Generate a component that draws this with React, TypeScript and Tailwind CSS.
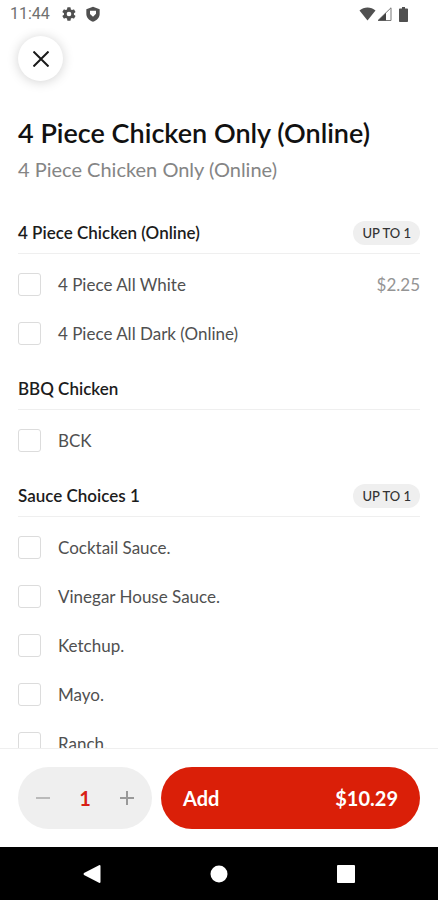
import { useState } from "react";

type Option = { name: string; price?: string };
type Group = { id: string; title: string; badge?: string; options: Option[] };

const groups: Group[] = [
  {
    id: "pieces",
    title: "4 Piece Chicken (Online)",
    badge: "UP TO 1",
    options: [
      { name: "4 Piece All White", price: "$2.25" },
      { name: "4 Piece All Dark (Online)" },
    ],
  },
  {
    id: "bbq",
    title: "BBQ Chicken",
    options: [{ name: "BCK" }],
  },
  {
    id: "sauces",
    title: "Sauce Choices 1",
    badge: "UP TO 1",
    options: [
      { name: "Cocktail Sauce." },
      { name: "Vinegar House Sauce." },
      { name: "Ketchup." },
      { name: "Mayo." },
      { name: "Ranch." },
    ],
  },
];

function StatusBar() {
  return (
    <div className="flex h-7 shrink-0 items-center pr-[30px] pl-[10px] font-[Roboto,sans-serif] text-[#505050]">
      <span className="text-base text-[#707070]">11:44</span>
      <svg viewBox="0 0 24 24" className="ml-[11px] size-4" fill="currentColor">
        <path
          fillRule="evenodd"
          d="M19.4 13a7.8 7.8 0 0 0 0-2l2.100-1.600a.5.5 0 0 0 .1-.7l-2-3.400a.5.5 0 0 0-.6-.2l-2.500 1a7.300 7.300 0 0 0-1.700-1l-.4-2.600a.5.5 0 0 0-.5-.5h-4a.5.5 0 0 0-.5.5L9 5.100a7.300 7.300 0 0 0-1.700 1l-2.500-1a.5.5 0 0 0-.6.2l-2 3.400a.5.5 0 0 0 .1.7L4.500 11a7.800 7.800 0 0 0 0 2l-2.200 1.600a.5.5 0 0 0-.1.700l2 3.400c.1.2.4.3.6.2l2.500-1a7.300 7.300 0 0 0 1.700 1l.4 2.600c0 .3.2.5.5.5h4c.3 0 .5-.2.5-.5l.4-2.600a7.300 7.300 0 0 0 1.700-1l2.500 1c.2.1.5 0 .6-.2l2-3.400a.5.500 0 0 0-.1-.7L19.400 13ZM12 15.500a3.500 3.500 0 1 1 0-7 3.500 3.500 0 0 1 0 7Z"
        />
      </svg>
      <svg viewBox="0 0 24 24" className="ml-2 size-4" fill="currentColor">
        <path
          fillRule="evenodd"
          d="M12 1 2 5v7c0 5.500 4.300 9.700 10 11.500 5.700-1.800 10-6 10-11.500V5L12 1ZM7.500 7h9v4.500L12 16 7.500 12Z"
        />
      </svg>
      <div className="ml-auto flex items-center">
        <svg viewBox="0 0 17 14" className="h-[14px] w-[17px]" fill="currentColor">
          <path d="M.5 3.500C5-.5 12-.5 16.500 3.500L8.500 13.500Z" />
        </svg>
        <svg viewBox="0 0 15 14" className="ml-[1px] h-[14px] w-[15px]">
          <path d="M1 13.500 14 .8v12.700Z" fill="#fff" stroke="#777" />
          <path d="M1 13.500 9 5.700v7.800Z" fill="#444" />
        </svg>
        <svg viewBox="0 0 9 15" className="ml-[7px] h-[15px] w-[9px]" fill="currentColor">
          <path d="M3 0h3v1.500h2.200c.5 0 .8.3.8.8v11.900c0 .5-.3.800-.8.800H.8c-.5 0-.8-.3-.8-.8V2.300c0-.5.3-.8.8-.8H3Z" />
        </svg>
      </div>
    </div>
  );
}

function OptionGroup({ group }: { group: Group }) {
  return (
    <section aria-labelledby={group.id} className="mb-[10px]">
      <div className="flex h-[42px] items-center justify-between border-b border-[#efefef]">
        <h2 id={group.id} className="text-[17px] leading-6 font-semibold text-[#1c1c1c]">
          {group.title}
        </h2>
        {group.badge && (
          <span className="rounded-full bg-[#efefef] px-[9px] text-[13px] leading-6 font-medium text-[#333]">
            {group.badge}
          </span>
        )}
      </div>
      <div className="pt-[6px]">
        {group.options.map((option) => (
          <label key={option.name} className="flex h-[49px] items-center">
            <input
              type="checkbox"
              className="size-[23px] shrink-0 appearance-none rounded-[3px] border border-[#dcdcdc] bg-white checked:border-[#da1f08] checked:bg-[#da1f08]"
            />
            <span className="ml-[17px] text-[17px] leading-6 text-[#505050]">
              {option.name}
            </span>
            {option.price && (
              <span className="ml-auto text-[17px] leading-6 text-[#949494]">
                {option.price}
              </span>
            )}
          </label>
        ))}
      </div>
    </section>
  );
}

export default function App() {
  const [count, setCount] = useState(1);

  return (
    <div className="flex h-screen flex-col overflow-hidden bg-white font-[Lato,sans-serif]">
      <StatusBar />

      <main className="min-h-0 flex-1 overflow-hidden px-[18px] pt-2">
        <button
          type="button"
          aria-label="Close"
          className="flex size-[45px] items-center justify-center rounded-full bg-white text-[#1a1a1a] shadow-[0_1px_12px_rgba(0,0,0,0.18)]"
        >
          <svg viewBox="0 0 16 16" className="size-4" stroke="currentColor" strokeWidth="2">
            <path d="M.5.5l15 15M15.500.5l-15 15" />
          </svg>
        </button>

        <h1 className="mt-[34px] text-[27px] leading-9 font-semibold text-[#111]">
          4 Piece Chicken Only (Online)
        </h1>
        <p className="mt-[6px] mb-[31px] text-xl leading-6 text-[#858585]">
          4 Piece Chicken Only (Online)
        </p>

        {groups.map((group) => (
          <OptionGroup key={group.id} group={group} />
        ))}
      </main>

      <footer className="flex shrink-0 gap-[9px] border-t border-[#efefef] px-[18px] py-[18px]">
        <div className="flex h-[62px] w-[134px] shrink-0 items-center justify-between rounded-full bg-[#efefef] px-[18px]">
          <button
            type="button"
            aria-label="Remove one"
            onClick={() => setCount(Math.max(1, count - 1))}
            className="text-[#bababa]"
          >
            <svg viewBox="0 0 14 14" className="size-[14px]" stroke="currentColor" strokeWidth="2">
              <path d="M0 7h14" />
            </svg>
          </button>
          <span className="text-xl font-bold text-[#d81f16]">{count}</span>
          <button
            type="button"
            aria-label="Add one"
            onClick={() => setCount(count + 1)}
            className="text-[#999]"
          >
            <svg viewBox="0 0 14 14" className="size-[14px]" stroke="currentColor" strokeWidth="2">
              <path d="M0 7h14M7 0v14" />
            </svg>
          </button>
        </div>
        <button
          type="button"
          className="flex h-[62px] flex-1 items-center justify-between rounded-full bg-[#da1f08] px-[22px] text-xl font-bold text-white"
        >
          <span>Add</span>
          <span>$10.29</span>
        </button>
      </footer>

      <nav className="flex h-[53px] shrink-0 items-center justify-center gap-[109px] bg-black text-white">
        <button type="button" aria-label="Back">
          <svg viewBox="0 0 18 18" className="size-[18px]" fill="currentColor">
            <path d="M16.500 0Q17.500 0 17.500 1v16q0 1-1 1L1 10Q0 9 1 8Z" />
          </svg>
        </button>
        <button type="button" aria-label="Home">
          <svg viewBox="0 0 18 18" className="size-[18px]" fill="currentColor">
            <circle cx="9" cy="9" r="8.500" />
          </svg>
        </button>
        <button type="button" aria-label="Recent apps">
          <svg viewBox="0 0 18 18" className="size-[18px]" fill="currentColor">
            <rect width="18" height="18" rx="1" />
          </svg>
        </button>
      </nav>
    </div>
  );
}
